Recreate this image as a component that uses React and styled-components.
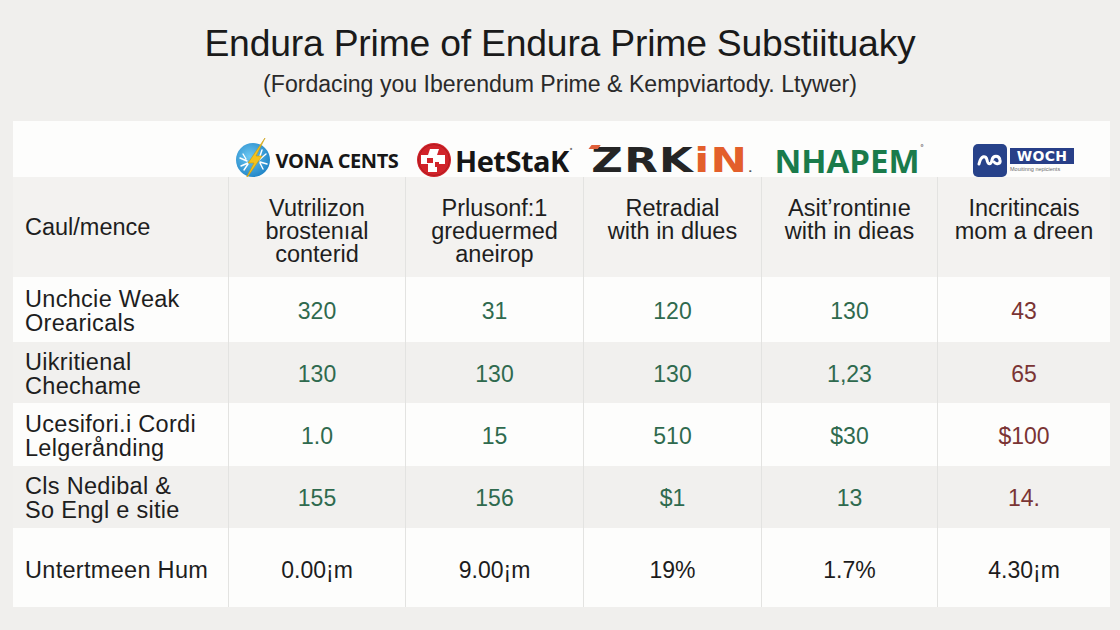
import React from 'react';
import styled, { createGlobalStyle } from 'styled-components';

const Global = createGlobalStyle`
  html, body { margin: 0; padding: 0; background: #f0efed; }
  body {
    font-family: "Liberation Sans", Arial, sans-serif;
    color: #1f1f1f;
    width: 1120px;
    height: 630px;
    overflow: hidden;
  }
`;

const Page = styled.div`
  width: 1120px;
  height: 630px;
  box-sizing: border-box;
  padding-top: 22px;
  display: flex;
  flex-direction: column;
  align-items: center;
`;

const Title = styled.h1`
  margin: 0;
  font-weight: 400;
  font-size: 37.3px;
  line-height: 42px;
  letter-spacing: -0.2px;
  color: #1a1a1a;
`;

const Subtitle = styled.p`
  margin: 7px 0 0;
  font-size: 23.1px;
  line-height: 26px;
  color: #2a2a2a;
`;

const Table = styled.div`
  align-self: flex-start;
  margin: 24px 0 0 13px;
  width: 1097px;
  display: flex;
  flex-direction: column;
`;

const COLS = '215px 177px 178px 178px 176px 173px';

const Row = styled.div`
  display: grid;
  grid-template-columns: ${COLS};
  height: ${(p) => p.$h}px;
  background: ${(p) => (p.$shade === 'gray' ? '#f1f0ee' : p.$shade === 'head' ? '#f3f2f0' : '#fdfdfc')};
`;

const LogoCell = styled.div`
  display: flex;
  align-items: center;
  justify-content: center;
  padding-top: 16px;
`;

const HeadCell = styled.div`
  border-left: ${(p) => (p.$first ? 'none' : '1px solid #e3e3e1')};
  display: flex;
  flex-direction: column;
  align-items: ${(p) => (p.$first ? 'flex-start' : 'center')};
  justify-content: ${(p) => (p.$first ? 'center' : 'flex-start')};
  padding: ${(p) => (p.$first ? '1px 0 0 12px' : '20px 0 0')};
  font-size: 23.5px;
  color: #1e1e1e;
  text-align: center;
`;

const Line = styled.span`
  display: block;
  height: 23px;
  line-height: 23px;
  white-space: nowrap;
`;

const LabelCell = styled.div`
  display: flex;
  flex-direction: column;
  justify-content: center;
  padding: ${(p) => (p.$last ? 5 : 2)}px 0 0 12px;
  font-size: 23.5px;
  letter-spacing: 0.3px;
  color: #1e1e1e;
`;

const LabelLine = styled.span`
  display: block;
  height: 24px;
  line-height: 24px;
  white-space: nowrap;
`;

const NumCell = styled.div`
  border-left: 1px solid #e3e3e1;
  display: flex;
  align-items: center;
  justify-content: center;
  padding-top: ${(p) => (p.$tone === 'dark' ? 5 : 3)}px;
  font-size: 23px;
  color: ${(p) => (p.$tone === 'red' ? '#7a3434' : p.$tone === 'dark' ? '#1c1c1c' : '#2f6a4e')};
`;

/* ---------- logos ---------- */

const Logo = styled.div`
  display: flex;
  align-items: center;
  gap: ${(p) => p.$gap || 4}px;
`;

const VonaText = styled.span`
  font-family: "Open Sans", sans-serif;
  font-weight: 700;
  font-size: 20px;
  letter-spacing: -0.4px;
  color: #171717;
`;

const HetText = styled.span`
  font-family: "Open Sans", sans-serif;
  font-weight: 700;
  font-size: 29px;
  letter-spacing: -0.5px;
  color: #161616;
  line-height: 1;
`;

const TinyMark = styled.sup`
  font-size: 7px;
  color: #777;
  vertical-align: top;
  margin-left: 1px;
`;

const ZrkWrap = styled.span`
  position: relative;
  display: inline-block;
  font-family: "DejaVu Sans", sans-serif;
  font-weight: 700;
  font-size: 33px;
  line-height: 1;
  letter-spacing: 1px;
  transform: scaleX(1.32);
  color: #252525;
  &::before {
    content: '';
    position: absolute;
    left: -1px;
    top: 1px;
    width: 7px;
    height: 4px;
    background: #e0603a;
    transform: skewX(-30deg);
  }
`;

const Orange = styled.span`
  color: #e35f2b;
`;

const Dot = styled.span`
  font-size: 8px;
  color: #555;
`;

const HapemText = styled.span`
  font-family: "Open Sans", sans-serif;
  font-weight: 700;
  font-size: 33px;
  line-height: 1;
  color: #1a7b4b;
`;

const WochSquare = styled.div`
  width: 34px;
  height: 33px;
  border-radius: 5px;
  background: #27428a;
  display: flex;
  align-items: center;
  justify-content: center;
`;

const WochRight = styled.div`
  display: flex;
  flex-direction: column;
  gap: 2px;
`;

const WochLabel = styled.div`
  background: #283f88;
  color: #fff;
  font-family: "DejaVu Sans", sans-serif;
  font-weight: 700;
  font-size: 14px;
  line-height: 16px;
  width: 64px;
  text-align: center;
  letter-spacing: 0.3px;
`;

const WochTiny = styled.div`
  font-size: 5.5px;
  line-height: 7px;
  color: #6b6b6b;
  white-space: nowrap;
`;

const VonaIcon = () => (
  <svg width="38" height="46" viewBox="0 0 38 46">
    <defs>
      <radialGradient id="vg" cx="0.4" cy="0.4" r="0.7">
        <stop offset="0" stopColor="#6cc8f2" />
        <stop offset="1" stopColor="#1a7fc3" />
      </radialGradient>
    </defs>
    <circle cx="18" cy="23" r="17" fill="url(#vg)" />
    <g stroke="#ffffff" strokeWidth="1.4" fill="none" strokeLinecap="round">
      <path d="M5 21 l7 3 M8 17 l3 5 M6 29 l7 -3 M9 33 l4 -6" />
      <path d="M31 17 l-7 6 M27 13 l-2 6 M32 27 l-7 -2 M28 32 l-3 -6" />
    </g>
    <polygon points="30,1 13,26 19,26 9,45 27,19 21,19" fill="#f4c21c" stroke="#c99a08" strokeWidth="0.6" />
  </svg>
);

const HetIcon = () => (
  <svg width="36" height="36" viewBox="0 0 36 36">
    <circle cx="18" cy="18" r="17" fill="#d1232a" />
    <circle cx="18" cy="18" r="15.5" fill="none" stroke="#b01a20" strokeWidth="1" />
    <path d="M14 7 h9 l-2 6 h8 v9 h-8 v8 h-9 v-8 h-7 v-9 h7 z" fill="#ffffff" />
    <rect x="11" y="16" width="6" height="5" fill="#d1232a" />
    <rect x="19" y="20" width="4" height="5" fill="#d1232a" />
  </svg>
);

const WochIcon = () => (
  <svg width="26" height="16" viewBox="0 0 26 16">
    <path
      d="M2 12 C 4 3, 9 3, 10 8 C 11 13, 14 13, 15 8 C 16 3, 22 3, 23 8 C 24 12, 19 13, 17 10"
      fill="none"
      stroke="#ffffff"
      strokeWidth="3"
      strokeLinecap="round"
    />
  </svg>
);

/* ---------- data ---------- */

const headers = [
  ['Vutrilizon', 'brostenıal', 'conterid'],
  ['Prlusonf:1', 'greduermed', 'aneirop'],
  ['Retradial', 'with in dlues'],
  ['Asit\u2019rontinıe', 'with in dieas'],
  ['Incritincais', 'mom a dreen'],
];

const rows = [
  { h: 65, shade: 'white', label: ['Unchcie Weak', 'Orearicals'], vals: ['320', '31', '120', '130', '43'] },
  { h: 61, shade: 'gray', label: ['Uikritienal', 'Chechame'], vals: ['130', '130', '130', '1,23', '65'] },
  { h: 63, shade: 'white', label: ['Ucesifori.i Cordi', 'Lelgerånding'], vals: ['1.0', '15', '510', '$30', '$100'] },
  { h: 62, shade: 'gray', label: ['Cls Nedibal &', 'So Engl e sitie'], vals: ['155', '156', '$1', '13', '14.'] },
  { h: 79, shade: 'white', label: ['Untertmeen Hum'], vals: ['0.00¡m', '9.00¡m', '19%', '1.7%', '4.30¡m'], dark: true },
];

export default function App() {
  return (
    <>
      <Global />
      <Page>
        <Title>Endura Prime of Endura Prime Substiituaky</Title>
        <Subtitle>(Fordacing you Iberendum Prime &amp; Kempviartody. Ltywer)</Subtitle>
        <Table>
          <Row $h={56} $shade="white">
            <LogoCell />
            <LogoCell>
              <Logo $gap={3}>
                <VonaIcon />
                <VonaText>VONA CENTS</VonaText>
              </Logo>
            </LogoCell>
            <LogoCell>
              <Logo $gap={3}>
                <HetIcon />
                <HetText>
                  HetStaK<TinyMark>•</TinyMark>
                </HetText>
              </Logo>
            </LogoCell>
            <LogoCell>
              <Logo>
                <ZrkWrap>
                  ZRK<Orange>iN</Orange>
                  <Dot>.</Dot>
                </ZrkWrap>
              </Logo>
            </LogoCell>
            <LogoCell>
              <Logo>
                <HapemText>
                  NHAPEM<TinyMark>°</TinyMark>
                </HapemText>
              </Logo>
            </LogoCell>
            <LogoCell>
              <Logo $gap={3}>
                <WochSquare>
                  <WochIcon />
                </WochSquare>
                <WochRight>
                  <WochLabel>WOCH</WochLabel>
                  <WochTiny>Mouitinng nepicients</WochTiny>
                </WochRight>
              </Logo>
            </LogoCell>
          </Row>
          <Row $h={100} $shade="head">
            <HeadCell $first>Caul/mence</HeadCell>
            {headers.map((lines, i) => (
              <HeadCell key={i}>
                {lines.map((l, j) => (
                  <Line key={j}>{l}</Line>
                ))}
              </HeadCell>
            ))}
          </Row>
          {rows.map((r, i) => (
            <Row key={i} $h={r.h} $shade={r.shade}>
              <LabelCell $last={r.dark}>
                {r.label.map((l, j) => (
                  <LabelLine key={j}>{l}</LabelLine>
                ))}
              </LabelCell>
              {r.vals.map((v, j) => (
                <NumCell key={j} $tone={r.dark ? 'dark' : j === 4 ? 'red' : 'green'}>
                  {v}
                </NumCell>
              ))}
            </Row>
          ))}
        </Table>
      </Page>
    </>
  );
}
